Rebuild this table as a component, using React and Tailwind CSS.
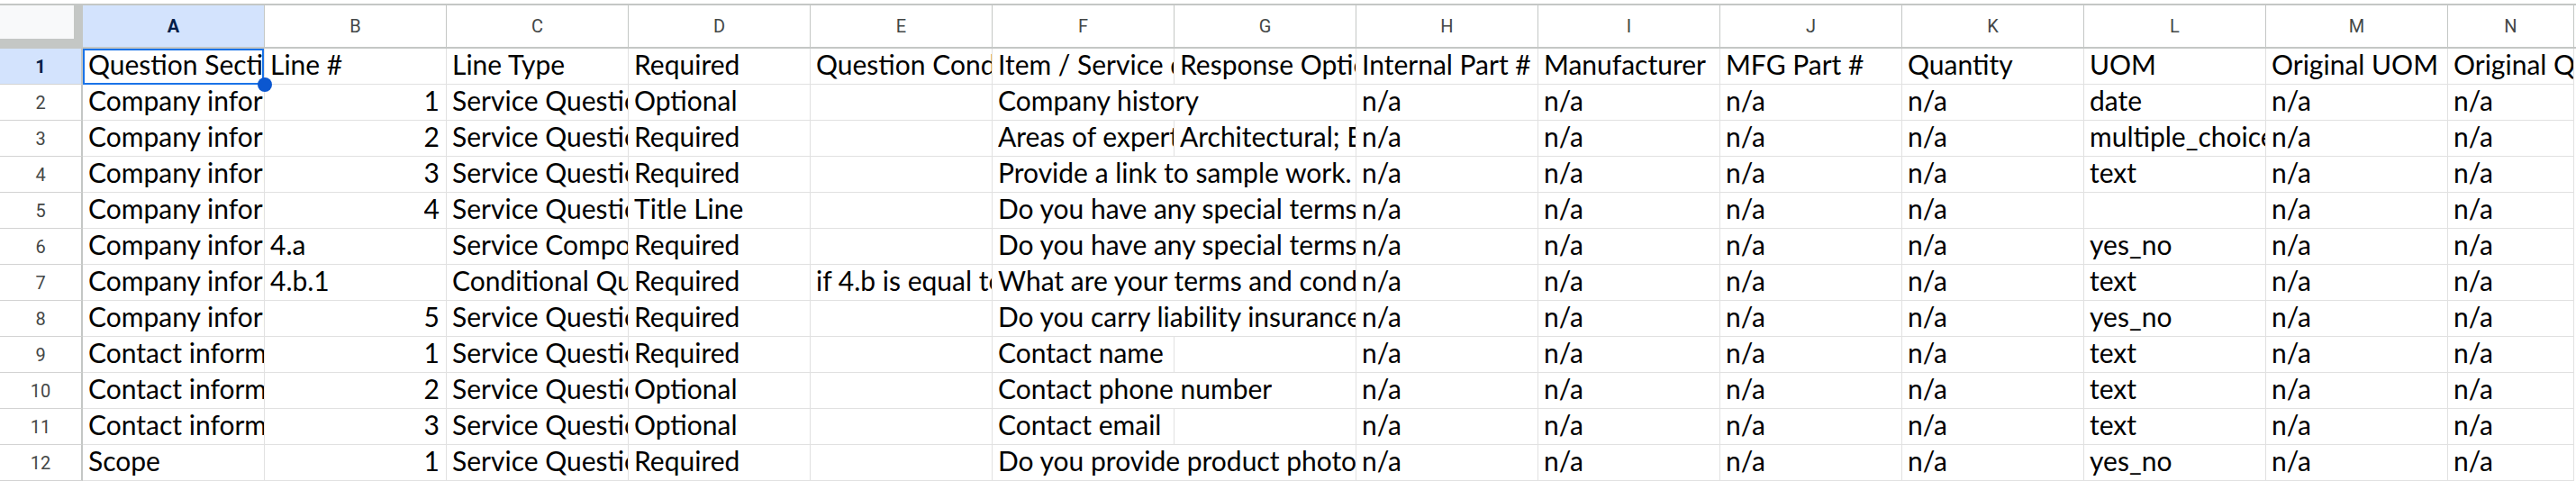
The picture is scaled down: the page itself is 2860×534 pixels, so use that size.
import React from "react";

const letters = ["A", "B", "C", "D", "E", "F", "G", "H", "I", "J", "K", "L", "M", "N"];

const widths = {
  1: "w-[202px]",
  2: "w-[404px]",
};

// null = covered by the text of the cell on its left
const rows = [
  ["Question Section", "Line #", "Line Type", "Required", "Question Condition", "Item / Service description", "Response Options", "Internal Part #", "Manufacturer", "MFG Part #", "Quantity", "UOM", "Original UOM", "Original Quantity"],
  ["Company information", 1, "Service Question", "Optional", "", "Company history", null, "n/a", "n/a", "n/a", "n/a", "date", "n/a", "n/a"],
  ["Company information", 2, "Service Question", "Required", "", "Areas of expertise", "Architectural; Engineering; Interior Design", "n/a", "n/a", "n/a", "n/a", "multiple_choice", "n/a", "n/a"],
  ["Company information", 3, "Service Question", "Required", "", "Provide a link to sample work.", null, "n/a", "n/a", "n/a", "n/a", "text", "n/a", "n/a"],
  ["Company information", 4, "Service Question", "Title Line", "", "Do you have any special terms or conditions?", null, "n/a", "n/a", "n/a", "n/a", "", "n/a", "n/a"],
  ["Company information", "4.a", "Service Component", "Required", "", "Do you have any special terms or conditions?", null, "n/a", "n/a", "n/a", "n/a", "yes_no", "n/a", "n/a"],
  ["Company information", "4.b.1", "Conditional Question", "Required", "if 4.b is equal to Yes", "What are your terms and conditions?", null, "n/a", "n/a", "n/a", "n/a", "text", "n/a", "n/a"],
  ["Company information", 5, "Service Question", "Required", "", "Do you carry liability insurance?", null, "n/a", "n/a", "n/a", "n/a", "yes_no", "n/a", "n/a"],
  ["Contact information", 1, "Service Question", "Required", "", "Contact name", "", "n/a", "n/a", "n/a", "n/a", "text", "n/a", "n/a"],
  ["Contact information", 2, "Service Question", "Optional", "", "Contact phone number", null, "n/a", "n/a", "n/a", "n/a", "text", "n/a", "n/a"],
  ["Contact information", 3, "Service Question", "Optional", "", "Contact email", "", "n/a", "n/a", "n/a", "n/a", "text", "n/a", "n/a"],
  ["Scope", 1, "Service Question", "Required", "", "Do you provide product photography?", null, "n/a", "n/a", "n/a", "n/a", "yes_no", "n/a", "n/a"],
];

const Cell = ({ value, span, last, selected }) => {
  const isNum = typeof value === "number";
  const width = last ? "w-[140px]" : widths[span];
  return (
    <div
      className={`${width} shrink-0 h-full flex items-end border-r border-b border-[#e1e1e1] ${
        isNum ? "justify-end pr-[7px]" : "pl-[6px]"
      } ${selected ? "relative" : "overflow-hidden"}`}
    >
      <span className="block overflow-hidden whitespace-nowrap pb-[7px] leading-none">
        {value}
      </span>
      {selected && (
        <>
          <div className="absolute left-0 top-0 right-0 -bottom-px border-2 border-[#1a73e8]" />
          <div className="absolute -right-[9px] -bottom-[9px] w-4 h-4 rounded-full bg-[#0b57d0] z-10" />
        </>
      )}
    </div>
  );
};

const Row = ({ cells, index }) => {
  const items = [];
  cells.forEach((value, i) => {
    if (value === null) return;
    let span = 1;
    while (cells[i + span] === null) span++;
    items.push({ value, span, i });
  });
  const active = index === 1;
  return (
    <div className="flex h-[40px]">
      <div
        className={`w-[92px] shrink-0 flex items-center justify-center border-r-2 border-b border-r-[#c4c7c5] border-b-[#d3d3d3] font-['Roboto'] text-[20px] ${
          active ? "bg-[#d3e3fd] text-[#041e49] font-bold" : "text-[#444746]"
        }`}
      >
        {index}
      </div>
      {items.map(({ value, span, i }) => (
        <Cell
          key={i}
          value={value}
          span={span}
          last={i === 13}
          selected={active && i === 0}
        />
      ))}
    </div>
  );
};

export default function App() {
  return (
    <div className="w-[2860px] h-[534px] overflow-hidden bg-white pt-1 font-['Lato',sans-serif] text-[30px] text-black">
      {/* column letters */}
      <div className="flex h-[50px] border-t-2 border-b-2 border-[#c4c7c5]">
        <div className="w-[92px] shrink-0 bg-[#c4c7c5]">
          <div className="w-[82px] h-[37px] bg-[#f8f9fa]" />
        </div>
        {letters.map((l, i) => (
          <div
            key={l}
            className={`${i === 13 ? "w-[140px]" : "w-[202px]"} shrink-0 flex items-center justify-center border-r border-[#c4c7c5] font-['Roboto'] text-[20px] ${
              i === 0 ? "bg-[#d3e3fd] text-[#041e49] font-bold" : "text-[#444746]"
            }`}
          >
            {l}
          </div>
        ))}
      </div>

      {rows.map((cells, r) => (
        <Row key={r} cells={cells} index={r + 1} />
      ))}
    </div>
  );
}
